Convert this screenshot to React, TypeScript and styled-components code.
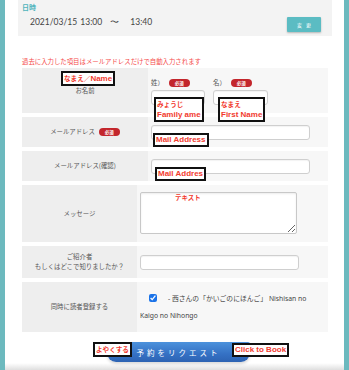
import React from 'react'
import styled, { createGlobalStyle } from 'styled-components'

const GlobalStyle = createGlobalStyle`
  html, body {
    margin: 0;
    padding: 0;
    background: #fff;
  }
  body {
    font-family: "Noto Sans", "Noto Sans CJK JP", sans-serif;
    color: #444;
  }
`

const JP = `"Noto Sans CJK JP", "Noto Sans", sans-serif`

const Frame = styled.div`
  position: relative;
  width: 349px;
  height: 370px;
  box-sizing: border-box;
  border-left: 5px solid #6cb9be;
  border-right: 5px solid #6cb9be;
  padding: 0 12px 0 13px;
  overflow: hidden;
  background: #fff;
`

const TopBox = styled.div`
  height: 36px;
  box-sizing: border-box;
  background: #f3f3f3;
  padding: 3px 11px 0 4px;
`

const Heading = styled.div`
  font-family: ${JP};
  font-size: 7px;
  line-height: 9px;
  font-weight: 700;
  color: #4fb4bc;
`

const DateRow = styled.div`
  display: flex;
  justify-content: space-between;
  align-items: flex-start;
  margin-top: 5px;
  padding-left: 8px;
`

const DateText = styled.span`
  font-family: Lato, "Noto Sans", sans-serif;
  font-size: 8.5px;
  line-height: 10px;
  color: #444;
  word-spacing: 1px;
  & b {
    font-weight: 400;
    margin: 0 8px;
  }
`

const ChangeButton = styled.button`
  width: 34px;
  height: 15px;
  padding: 0;
  border: none;
  border-radius: 1px;
  background: #5bbcc3;
  color: #fff;
  font-family: ${JP};
  font-size: 5px;
  letter-spacing: 4px;
  text-indent: 4px;
  box-shadow: 0 1px 2px rgba(0, 0, 0, 0.25);
`

const Notice = styled.p`
  margin: 21px 0 2px 4px;
  font-family: ${JP};
  font-size: 6.4px;
  line-height: 9px;
  color: #f54a4a;
`

const Table = styled.div`
  margin: 0 4px;
`

const Row = styled.div<{ $label: number; $h: number }>`
  display: grid;
  grid-template-columns: ${({ $label }) => $label}px 1fr;
  height: ${({ $h }) => $h}px;
  margin-bottom: 4px;
`

const LabelCell = styled.div`
  position: relative;
  display: flex;
  flex-direction: column;
  align-items: center;
  justify-content: center;
  background: #eeeeee;
  font-family: ${JP};
  font-size: 6.4px;
  line-height: 10px;
  color: #555;
  text-align: center;
`

const LabelLine = styled.div`
  display: flex;
  align-items: center;
  gap: 4px;
`

const ValueCell = styled.div<{ $top?: boolean }>`
  position: relative;
  display: flex;
  flex-direction: column;
  justify-content: ${({ $top }) => ($top ? 'flex-start' : 'center')};
  background: #f7f7f7;
  padding-left: 3px;
`

const Pill = styled.span`
  display: inline-flex;
  align-items: center;
  justify-content: center;
  width: 21px;
  height: 8px;
  border-radius: 4px;
  background: #c3262c;
  color: #fff;
  font-family: ${JP};
  font-size: 4.5px;
  font-weight: 700;
`

const NameRow = styled.div`
  display: flex;
  padding-top: 10px;
`

const NameGroup = styled.div<{ $w: number }>`
  width: ${({ $w }) => $w}px;
  display: flex;
  flex-direction: column;
  gap: 3px;
`

const NameLabel = styled.div`
  display: flex;
  align-items: center;
  gap: 5px;
  height: 9px;
  font-family: ${JP};
  font-size: 6.4px;
  color: #555;
`

const TextInput = styled.input<{ $w: number }>`
  box-sizing: border-box;
  width: ${({ $w }) => $w}px;
  height: 15px;
  margin: 0;
  border: 1px solid #cfcfcf;
  border-radius: 3px;
  background: #fff;
  box-shadow: inset 0 1px 1px rgba(0, 0, 0, 0.05);
  outline: none;
`

const TextArea = styled.textarea`
  box-sizing: border-box;
  width: 157px;
  height: 42px;
  margin: 7px 0 0;
  border: 1px solid #c8c8c8;
  border-radius: 2px;
  background: #fff;
  box-shadow: inset 0 1px 2px rgba(0, 0, 0, 0.08);
  outline: none;
`

const CheckText = styled.div`
  font-family: "Noto Sans", "Noto Sans CJK JP", sans-serif;
  font-size: 6.8px;
  line-height: 17px;
  color: #444;
  padding-left: 9px;
  & input {
    width: 8px;
    height: 8px;
    margin: 0 11px 0 0;
    vertical-align: -1px;
    accent-color: #1b73e8;
  }
  & span {
    display: block;
    margin-left: -9px;
  }
`

const BottomLayer = styled.div`
  position: relative;
  display: flex;
  justify-content: center;
  padding: 6px 0 0 7px;
`

const BookButton = styled.button`
  width: 143px;
  height: 20px;
  padding: 0;
  border: none;
  border-radius: 2px 2px 9px 9px;
  background: linear-gradient(to bottom, #4c92dc, #3571c4 60%, #2d63b3);
  color: #fff;
  font-family: ${JP};
  font-size: 7.5px;
  letter-spacing: 3px;
  box-shadow: 0 2px 3px rgba(0, 0, 0, 0.15);
`

const Shade = styled.div`
  position: absolute;
  left: 0;
  right: 0;
  bottom: 0;
  height: 7px;
  background: linear-gradient(to bottom, rgba(230, 230, 230, 0), rgba(215, 215, 215, 0.8));
  pointer-events: none;
`

const Annotation = styled.div<{ $x: number; $y: number }>`
  position: absolute;
  left: ${({ $x }) => $x}px;
  top: ${({ $y }) => $y}px;
  box-sizing: border-box;
  padding: 0 1px;
  border: 2px solid #111;
  background: #fff;
  color: #f23b2f;
  font-family: "Liberation Sans", "Noto Sans CJK JP", sans-serif;
  font-weight: 700;
  font-size: 8px;
  line-height: 10px;
  white-space: nowrap;
  z-index: 2;
`

const Kana = styled.span`
  font-family: ${JP};
  font-size: 6.6px;
`

const RedNote = styled.div<{ $x: number; $y: number }>`
  position: absolute;
  left: ${({ $x }) => $x}px;
  top: ${({ $y }) => $y}px;
  color: #f23b2f;
  font-family: ${JP};
  font-weight: 700;
  font-size: 6.5px;
  line-height: 8px;
`

const App: React.FC = () => {
  return (
    <>
      <GlobalStyle />
      <Frame>
        <TopBox>
          <Heading>日時</Heading>
          <DateRow>
            <DateText>
              2021/03/15 13:00<b>〜</b> 13:40
            </DateText>
            <ChangeButton>変更</ChangeButton>
          </DateRow>
        </TopBox>

        <Notice>過去に入力した項目はメールアドレスだけで自動入力されます</Notice>

        <Table>
          <Row $label={126} $h={45}>
            <LabelCell>
              <Annotation $x={39} $y={3}>
                <Kana>なまえ／</Kana>Name
              </Annotation>
              <LabelLine>お名前</LabelLine>
            </LabelCell>
            <ValueCell $top>
              <NameRow>
                <NameGroup $w={62}>
                  <NameLabel>
                    姓）<Pill>必須</Pill>
                  </NameLabel>
                  <TextInput $w={54} />
                </NameGroup>
                <NameGroup $w={60}>
                  <NameLabel>
                    名）<Pill>必須</Pill>
                  </NameLabel>
                  <TextInput $w={55} />
                </NameGroup>
              </NameRow>
              <Annotation $x={6} $y={29}>
                <Kana>みょうじ</Kana>
                <br />
                Family ame
              </Annotation>
              <Annotation $x={70} $y={29}>
                <Kana>なまえ</Kana>
                <br />
                First Name
              </Annotation>
            </ValueCell>
          </Row>

          <Row $label={126} $h={30}>
            <LabelCell>
              <LabelLine>
                メールアドレス<Pill>必須</Pill>
              </LabelLine>
            </LabelCell>
            <ValueCell>
              <TextInput $w={159} />
              <Annotation $x={5} $y={16}>Mail Address</Annotation>
            </ValueCell>
          </Row>

          <Row $label={126} $h={30}>
            <LabelCell>
              <LabelLine>メールアドレス(確認)</LabelLine>
            </LabelCell>
            <ValueCell>
              <TextInput $w={159} />
              <Annotation $x={7} $y={16}>Mail Addres</Annotation>
            </ValueCell>
          </Row>

          <Row $label={115} $h={57}>
            <LabelCell>
              <LabelLine>メッセージ</LabelLine>
            </LabelCell>
            <ValueCell $top>
              <TextArea />
              <RedNote $x={38} $y={8}>テキスト</RedNote>
            </ValueCell>
          </Row>

          <Row $label={115} $h={32}>
            <LabelCell>
              <div>ご紹介者</div>
              <div>もしくはどこで知りましたか？</div>
            </LabelCell>
            <ValueCell>
              <TextInput $w={159} />
            </ValueCell>
          </Row>

          <Row $label={115} $h={50}>
            <LabelCell>
              <LabelLine>同時に読者登録する</LabelLine>
            </LabelCell>
            <ValueCell>
              <CheckText>
                <input type='checkbox' defaultChecked />
                - 西さんの「かいごのにほんご」 Nishisan no
                <span>Kaigo no Nihongo</span>
              </CheckText>
            </ValueCell>
          </Row>
        </Table>

        <BottomLayer>
          <BookButton>予約をリクエスト</BookButton>
          <Annotation $x={75} $y={6}>
            <Kana>よやくする</Kana>
          </Annotation>
          <Annotation $x={214} $y={7}>Click to Book</Annotation>
        </BottomLayer>
        <Shade />
      </Frame>
    </>
  )
}

export default App
